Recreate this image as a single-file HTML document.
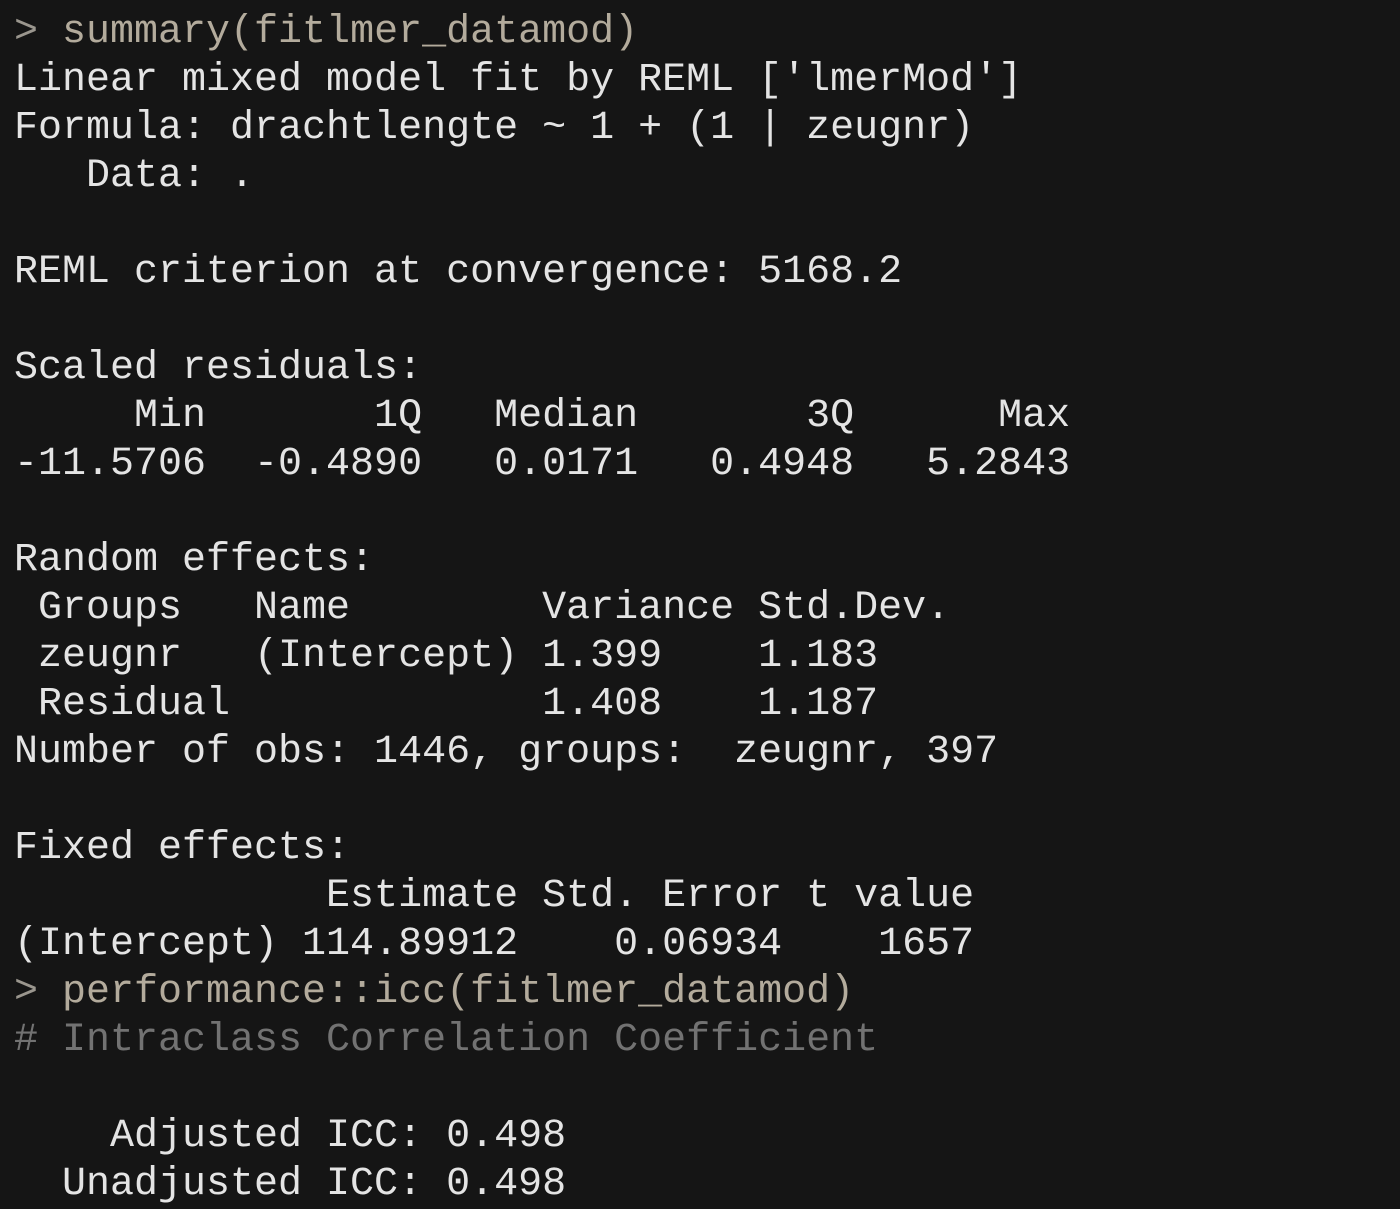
<!DOCTYPE html>
<html><head><meta charset="utf-8"><style>
html,body{margin:0;padding:0;background:#151515;width:1400px;height:1204px;overflow:hidden}
pre{margin:0;position:absolute;left:14px;top:9px;font-family:"Liberation Mono","Courier New",monospace;font-size:40px;line-height:48px;color:#e4e4e4;white-space:pre}
.p{color:#9a968e}.c{color:#b3ab9c}.g{color:#727272}
</style></head><body>
<pre><span class="p">&gt; </span><span class="c">summary(fitlmer_datamod)</span>
Linear mixed model fit by REML ['lmerMod']
Formula: drachtlengte ~ 1 + (1 | zeugnr)
   Data: .

REML criterion at convergence: 5168.2

Scaled residuals:
     Min       1Q   Median       3Q      Max 
-11.5706  -0.4890   0.0171   0.4948   5.2843 

Random effects:
 Groups   Name        Variance Std.Dev.
 zeugnr   (Intercept) 1.399    1.183   
 Residual             1.408    1.187   
Number of obs: 1446, groups:  zeugnr, 397

Fixed effects:
             Estimate Std. Error t value
(Intercept) 114.89912    0.06934    1657
<span class="p">&gt; </span><span class="c">performance::icc(fitlmer_datamod)</span>
<span class="g"># Intraclass Correlation Coefficient</span>

    Adjusted ICC: 0.498
  Unadjusted ICC: 0.498</pre>
</body></html>
